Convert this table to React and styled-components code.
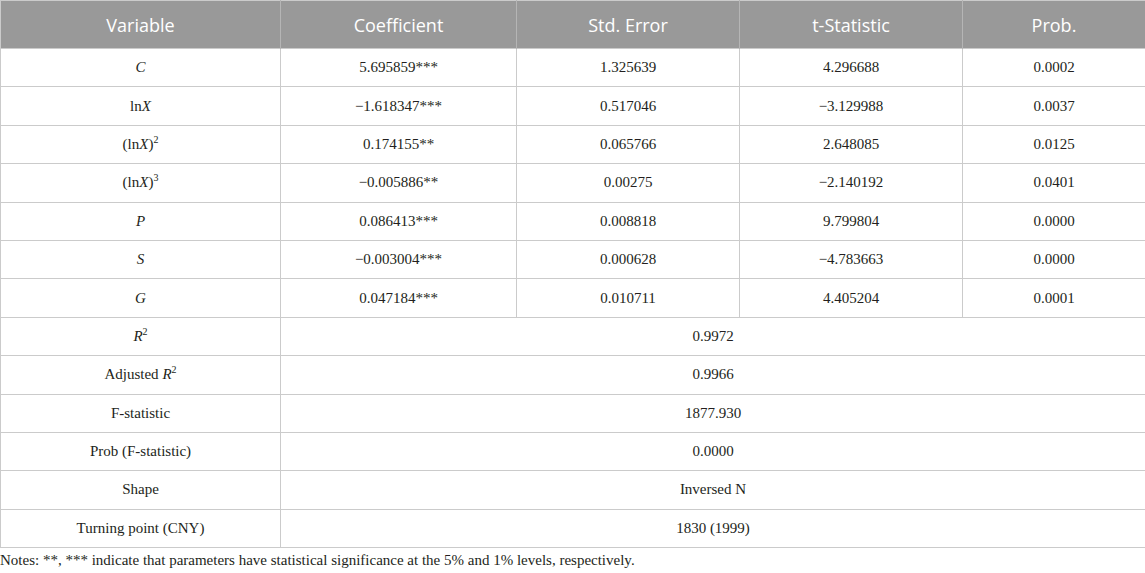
import * as React from "react"
import styled, { createGlobalStyle } from "styled-components"

const GlobalStyle = createGlobalStyle`
  body {
    margin: 0;
    background: #ffffff;
  }
`

const Wrap = styled.div`
  width: 1145px;
`

const Table = styled.table`
  width: 100%;
  border-collapse: collapse;
  table-layout: fixed;
  border: 1px solid #cbcbcb;
`

const HeadCell = styled.th`
  height: 47px;
  padding: 0;
  background: #999999;
  color: #ffffff;
  font-family: "Open Sans", sans-serif;
  font-size: 18px;
  font-weight: 400;
  text-align: center;
  border-right: 1px solid #b5b5b5;
`

const Cell = styled.td`
  height: 37.4px;
  padding: 0;
  text-align: center;
  color: #231f20;
  font-family: "Liberation Serif", serif;
  font-size: 15px;
  border: 1px solid #cbcbcb;
`

const Sup = styled.sup`
  font-size: 10px;
  vertical-align: 6px;
  line-height: 0;
`

const Notes = styled.p`
  margin: 4px 0 0;
  color: #231f20;
  font-family: "Liberation Serif", serif;
  font-size: 15px;
`

const cols = [280, 236, 223, 223, 183]

const lnX = (
  <>
    ln<i>X</i>
  </>
)

const coefRows = [
  [<i>C</i>, "5.695859***", "1.325639", "4.296688", "0.0002"],
  [lnX, "\u22121.618347***", "0.517046", "\u22123.129988", "0.0037"],
  [<>({lnX})<Sup>2</Sup></>, "0.174155**", "0.065766", "2.648085", "0.0125"],
  [<>({lnX})<Sup>3</Sup></>, "\u22120.005886**", "0.00275", "\u22122.140192", "0.0401"],
  [<i>P</i>, "0.086413***", "0.008818", "9.799804", "0.0000"],
  [<i>S</i>, "\u22120.003004***", "0.000628", "\u22124.783663", "0.0000"],
  [<i>G</i>, "0.047184***", "0.010711", "4.405204", "0.0001"],
]

const statRows = [
  [<><i>R</i><Sup>2</Sup></>, "0.9972"],
  [<>Adjusted <i>R</i><Sup>2</Sup></>, "0.9966"],
  ["F-statistic", "1877.930"],
  ["Prob (F-statistic)", "0.0000"],
  ["Shape", "Inversed N"],
  ["Turning point (CNY)", "1830 (1999)"],
]

export default function App() {
  return (
    <Wrap>
      <GlobalStyle />
      <Table>
        <colgroup>
          {cols.map((w, i) => (
            <col key={i} style={{ width: w }} />
          ))}
        </colgroup>
        <thead>
          <tr>
            <HeadCell>Variable</HeadCell>
            <HeadCell>Coefficient</HeadCell>
            <HeadCell>Std. Error</HeadCell>
            <HeadCell>t-Statistic</HeadCell>
            <HeadCell>Prob.</HeadCell>
          </tr>
        </thead>
        <tbody>
          {coefRows.map((row, r) => (
            <tr key={r}>
              {row.map((c, i) => (
                <Cell key={i}>{c}</Cell>
              ))}
            </tr>
          ))}
          {statRows.map(([label, value], r) => (
            <tr key={"s" + r}>
              <Cell>{label}</Cell>
              <Cell colSpan={4}>{value}</Cell>
            </tr>
          ))}
        </tbody>
      </Table>
      <Notes>
        Notes: **, *** indicate that parameters have statistical significance at the 5% and 1% levels, respectively.
      </Notes>
    </Wrap>
  )
}
